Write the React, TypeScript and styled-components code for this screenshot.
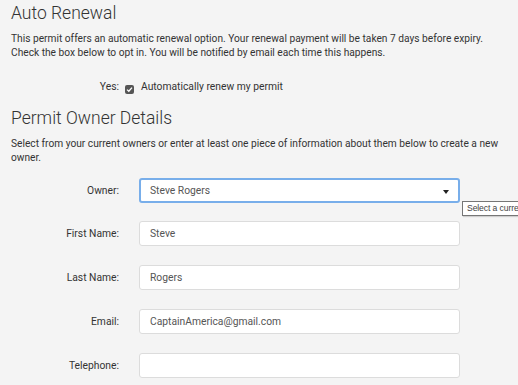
import React from "react";
import styled, { createGlobalStyle } from "styled-components";

const Global = createGlobalStyle`
  html, body { margin: 0; padding: 0; background: #f4f4f4; }
  body { font-family: Roboto, "Noto Sans", sans-serif; color: #333; }
`;

const Page = styled.div`
  width: 518px;
  height: 385px;
  overflow: hidden;
  padding: 0 0 0 11px;
  box-sizing: border-box;
  position: relative;
`;

const Heading = styled.h2<{ $top?: number }>`
  margin: ${(p) => p.$top ?? 0}px 0 0;
  font-weight: 300;
  font-size: 17.5px;
  line-height: 24px;
  color: #333;
  padding-top: 1px;
`;

const Para = styled.p`
  margin: 7px 0 0;
  font-size: 10.2px;
  line-height: 14px;
  width: 495px;
`;

const Row = styled.div<{ $top: number }>`
  display: flex;
  align-items: center;
  margin-top: ${(p) => p.$top}px;
`;

const Label = styled.label<{ $gap?: number }>`
  width: 108px;
  text-align: right;
  font-size: 10.3px;
  flex: none;
  margin-right: ${(p) => p.$gap ?? 20}px;
`;

const CheckWrap = styled.span`
  display: flex;
  align-items: center;
  gap: 7px;
  font-size: 10.3px;
`;

const Check = styled.span`
  width: 9px;
  height: 9px;
  border-radius: 2px;
  background: #555;
  display: inline-flex;
  align-items: center;
  justify-content: center;
  margin-top: 7px;
`;

const Input = styled.div<{ $focus?: boolean }>`
  width: 321px;
  height: 25px;
  box-sizing: border-box;
  background: #fff;
  border: ${(p) => (p.$focus ? "2px solid #78aeea" : "1px solid #dcdcdc")};
  border-radius: 3px;
  font-size: 10.3px;
  color: #555;
  display: flex;
  align-items: center;
  padding-left: ${(p) => (p.$focus ? "9px" : "10px")};
  position: relative;
`;

const Caret = styled.span`
  position: absolute;
  right: 9px;
  top: 10px;
  width: 0;
  height: 0;
  border-left: 3.5px solid transparent;
  border-right: 3.5px solid transparent;
  border-top: 4px solid #222;
`;

const Tooltip = styled.div`
  position: absolute;
  left: 462px;
  top: 201px;
  height: 15px;
  box-sizing: border-box;
  padding: 0 4px;
  border: 1px solid #767676;
  background: #fff;
  font-family: "Liberation Sans", sans-serif;
  font-size: 8.6px;
  letter-spacing: -0.1px;
  line-height: 13px;
  color: #444;
  white-space: nowrap;
  box-shadow: 1px 1px 1px rgba(0,0,0,0.15);
`;

export default function App() {
  return (
    <Page>
      <Global />
      <Heading>Auto Renewal</Heading>
      <Para>
        This permit offers an automatic renewal option. Your renewal payment will be taken 7 days before expiry.
        Check the box below to opt in. You will be notified by email each time this happens.
      </Para>
      <Row $top={18}>
        <Label $gap={6}>Yes:</Label>
        <CheckWrap>
          <Check>
            <svg width="7" height="7" viewBox="0 0 7 7">
              <path d="M1 3.6 L2.8 5.3 L6 1.6" fill="none" stroke="#fff" strokeWidth="1.3" />
            </svg>
          </Check>
          Automatically renew my permit
        </CheckWrap>
      </Row>
      <Heading $top={11}>Permit Owner Details</Heading>
      <Para>
        Select from your current owners or enter at least one piece of information about them below to create a new
        owner.
      </Para>
      <Row $top={13}>
        <Label>Owner:</Label>
        <Input $focus>
          Steve Rogers
          <Caret />
        </Input>
      </Row>
      <Row $top={18}>
        <Label>First Name:</Label>
        <Input>Steve</Input>
      </Row>
      <Row $top={19}>
        <Label>Last Name:</Label>
        <Input>Rogers</Input>
      </Row>
      <Row $top={19}>
        <Label>Email:</Label>
        <Input>CaptainAmerica@gmail.com</Input>
      </Row>
      <Row $top={19}>
        <Label>Telephone:</Label>
        <Input></Input>
      </Row>
      <Tooltip>Select a current owner</Tooltip>
    </Page>
  );
}
